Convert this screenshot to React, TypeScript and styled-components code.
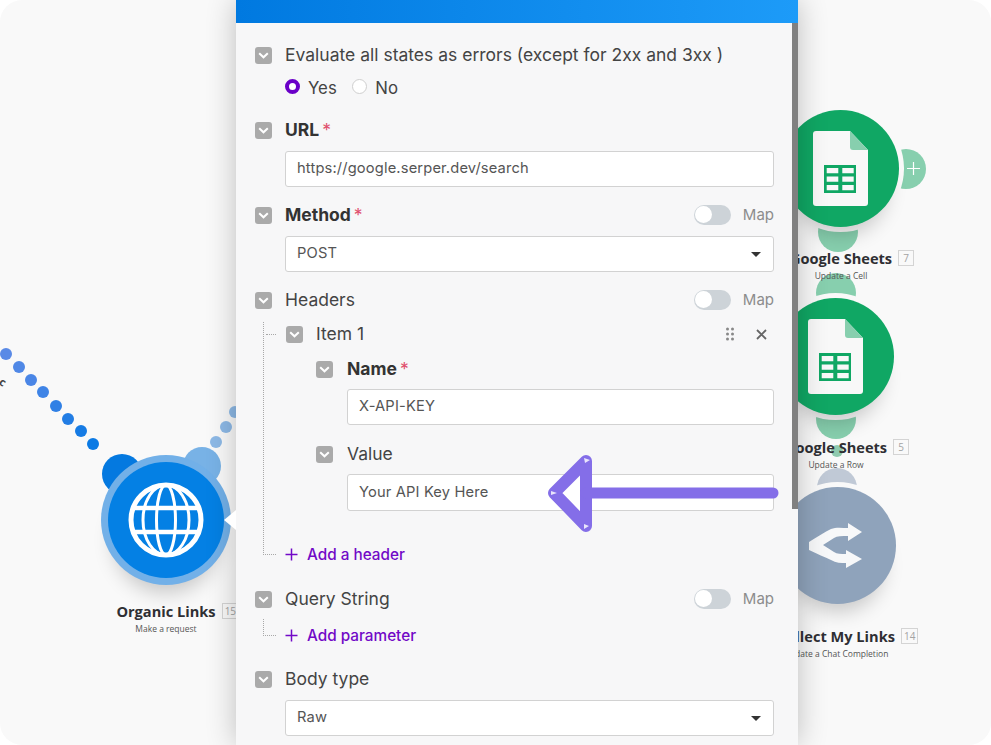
import React from "react";
import styled, { createGlobalStyle } from "styled-components";

const Global = createGlobalStyle`
  html, body { margin: 0; padding: 0; background: #fff; }
  * { box-sizing: border-box; }
  #root { width: 991px; height: 745px; overflow: hidden; }
`;

const Canvas = styled.div`
  position: relative;
  width: 991px;
  height: 745px;
  overflow: hidden;
  background: #f9f9f9;
  border-radius: 22px;
  font-family: "Open Sans", sans-serif;
`;

const Dot = styled.span<{ $x: number; $y: number; $c: string }>`
  position: absolute;
  left: ${(p) => p.$x - 6}px;
  top: ${(p) => p.$y - 6}px;
  width: 12px;
  height: 12px;
  border-radius: 50%;
  background: ${(p) => p.$c};
`;

const Fragment = styled.span`
  position: absolute;
  left: 0;
  top: 375px;
  font-size: 11px;
  line-height: 14px;
  font-weight: 700;
  color: #444;
  transform: rotate(35deg);
`;

const Node = styled.div<{ $x: number; $y: number }>`
  position: absolute;
  left: ${(p) => p.$x}px;
  top: ${(p) => p.$y}px;
  width: 0;
  height: 0;
`;

const Ear = styled.span<{ $x: number; $y: number; $c: string; $r?: number }>`
  position: absolute;
  left: ${(p) => p.$x - (p.$r ?? 20)}px;
  top: ${(p) => p.$y - (p.$r ?? 20)}px;
  width: ${(p) => (p.$r ?? 20) * 2}px;
  height: ${(p) => (p.$r ?? 20) * 2}px;
  border-radius: 50%;
  background: ${(p) => p.$c};
  display: flex;
  align-items: center;
  justify-content: flex-end;
  padding-right: 6px;
`;

const Disc = styled.div<{ $c: string; $r: number; $shadow?: boolean }>`
  position: absolute;
  left: ${(p) => -p.$r}px;
  top: ${(p) => -p.$r}px;
  width: ${(p) => p.$r * 2}px;
  height: ${(p) => p.$r * 2}px;
  border-radius: 50%;
  background: ${(p) => p.$c};
  display: flex;
  align-items: center;
  justify-content: center;
  box-shadow: ${(p) => (p.$shadow ? "0 20px 20px -12px rgba(0, 0, 0, 0.2)" : "none")};
`;

const Notch = styled.span`
  position: absolute;
  z-index: 4;
  left: 58px;
  top: -10px;
  width: 0;
  height: 0;
  border-top: 10px solid transparent;
  border-bottom: 10px solid transparent;
  border-right: 12px solid #fff;
`;

const NodeText = styled.div<{ $top: number; $shift?: number }>`
  position: absolute;
  z-index: 2;
  top: ${(p) => p.$top}px;
  left: ${(p) => (p.$shift ?? 0) - 150}px;
  width: 300px;
  text-align: center;
  color: #2f2f33;
`;

const NodeName = styled.div`
  position: relative;
  width: fit-content;
  margin: 0 auto;
  font-size: 14.6px;
  line-height: 18px;
  font-weight: 700;
  white-space: nowrap;
`;

const Badge = styled.span`
  position: absolute;
  left: calc(100% + 6px);
  top: 1px;
  min-width: 16px;
  height: 16px;
  padding: 0 2px;
  border: 1px solid #d4d4d4;
  background: #f9f9f9;
  font-size: 10px;
  line-height: 14px;
  font-weight: 400;
  text-align: center;
  color: #a3a3a3;
`;

const NodeSub = styled.div`
  font-size: 8.5px;
  line-height: 12px;
  margin-top: 3px;
  color: #555;
  white-space: nowrap;
`;

const Panel = styled.div`
  position: absolute;
  z-index: 3;
  left: 236px;
  top: 0;
  width: 562px;
  height: 745px;
  display: flex;
  flex-direction: column;
  background: #f7f7f8;
  box-shadow: 0 0 28px rgba(0, 0, 0, 0.24);
  font-family: Inter, sans-serif;
  color: #444;
`;

const Header = styled.div`
  flex: none;
  height: 23px;
  background: linear-gradient(90deg, #0079e0, #1d9bf8);
`;

const ScrollThumb = styled.div`
  position: absolute;
  right: 0;
  top: 23px;
  width: 6px;
  height: 486px;
  background: #808080;
`;

const Body = styled.div`
  padding: 20px 24px 0 19px;
  display: flex;
  flex-direction: column;
`;

const Row = styled.div<{ $top?: number; $left?: number; $gap?: number }>`
  display: flex;
  align-items: center;
  height: 24px;
  margin-top: ${(p) => p.$top ?? 0}px;
  margin-left: ${(p) => p.$left ?? 0}px;
  gap: ${(p) => p.$gap ?? 13}px;
`;

const Tile = styled.span`
  flex: none;
  width: 17px;
  height: 17px;
  border-radius: 3px;
  background: #aaaaaa;
  display: flex;
  align-items: center;
  justify-content: center;
`;

const Label = styled.span<{ $bold?: boolean }>`
  font-size: 17.5px;
  line-height: 22px;
  font-weight: ${(p) => (p.$bold ? 700 : 400)};
  color: ${(p) => (p.$bold ? "#333" : "#444")};
  white-space: nowrap;
`;

const Star = styled.span`
  color: #e0506e;
  font-weight: 400;
  margin-left: 3px;
`;

const Radios = styled.div`
  display: flex;
  align-items: center;
  height: 24px;
  margin: 9px 0 0 30px;
`;

const Radio = styled.span<{ $on?: boolean }>`
  width: 15px;
  height: 15px;
  border-radius: 50%;
  background: #fff;
  border: ${(p) => (p.$on ? "4px solid #6a00c8" : "1px solid #cfcfcf")};
  margin-right: 8px;
  margin-top: -3px;
`;

const RadioText = styled.span`
  font-size: 16.8px;
  color: #444;
  margin-right: 15.5px;
`;

const Input = styled.div<{ $left: number; $top: number; $h?: number }>`
  position: relative;
  height: ${(p) => p.$h ?? 36}px;
  margin: ${(p) => p.$top}px 0 0 ${(p) => p.$left}px;
  padding: 0 12px 2px 11px;
  display: flex;
  align-items: center;
  justify-content: space-between;
  background: #fff;
  border: 1px solid #d2d2d2;
  border-radius: 3px;
  font-size: 14.7px;
  letter-spacing: 0.15px;
  color: #555;
`;

const Caret = styled.span`
  width: 0;
  height: 0;
  margin-top: 2px;
  border-left: 5.5px solid transparent;
  border-right: 5.5px solid transparent;
  border-top: 5.5px solid #333;
`;

const MapControl = styled.div`
  margin-left: auto;
  display: flex;
  align-items: center;
  gap: 12px;
  font-size: 15px;
  line-height: 18px;
  color: #8c8c8c;
  padding-bottom: 1px;
`;

const Toggle = styled.span`
  width: 37px;
  height: 20px;
  border-radius: 10px;
  background: #cdd3d8;
  display: flex;
  align-items: center;
  padding-left: 1px;
`;

const Knob = styled.span`
  width: 17px;
  height: 17px;
  border-radius: 50%;
  background: #fff;
`;

const Tree = styled.div<{ $top: number }>`
  position: relative;
  margin: ${(p) => p.$top}px 0 0 8px;
  padding-left: 23px;
`;

const Rail = styled.span`
  position: absolute;
  left: 0;
  top: 0;
  bottom: 12px;
  border-left: 1px dotted #a8a8a8;
`;

const Branch = styled.span<{ $item?: boolean }>`
  position: absolute;
  left: ${(p) => (p.$item ? 3 : 0)}px;
  ${(p) => (p.$item ? "top: 12px;" : "bottom: 12px;")}
  width: ${(p) => (p.$item ? 10 : 13)}px;
  border-top: 1px dotted #a8a8a8;
`;

const ItemActions = styled.div`
  margin-left: auto;
  margin-right: 7px;
  display: flex;
  align-items: center;
  gap: 22px;
`;

const AddRow = styled.div<{ $top: number }>`
  display: flex;
  align-items: center;
  gap: 9px;
  height: 24px;
  margin: ${(p) => p.$top}px 0 0 -1px;
  font-size: 15.3px;
  font-weight: 500;
  color: #7209c7;
  padding-bottom: 1px;
`;

const ArrowLayer = styled.svg`
  position: absolute;
  z-index: 4;
  left: 0;
  top: 0;
  pointer-events: none;
`;

const Chevron = () => (
  <svg width="11" height="7" viewBox="0 0 11 7" fill="none">
    <path d="M1.2 1.2 5.5 5.3 9.8 1.2" stroke="#fff" strokeWidth="2" />
  </svg>
);

const Plus = () => (
  <svg width="13" height="13" viewBox="0 0 13 13" fill="none">
    <path d="M6.500 0.500v12M0.500 6.500h12" stroke="#7209c7" strokeWidth="1.500" />
  </svg>
);

const Globe = () => (
  <svg width="76" height="76" viewBox="0 0 76 76" fill="none" stroke="#fff">
    <circle cx="38" cy="38" r="35" strokeWidth="5" />
    <path d="M4 26h68M4 50h68" strokeWidth="4.500" />
    <ellipse cx="38" cy="38" rx="9.500" ry="35" strokeWidth="3" />
    <ellipse cx="38" cy="38" rx="23" ry="35" strokeWidth="3" />
  </svg>
);

const SheetDoc = () => (
  <svg width="55" height="75" viewBox="0 0 55 75">
    <path d="M3 0h34l18 19v53a3 3 0 0 1-3 3H3a3 3 0 0 1-3-3V3a3 3 0 0 1 3-3z" fill="#f8f8f8" />
    <path d="M37 0l18 19H40a3 3 0 0 1-3-3z" fill="#87cfae" />
    <path d="M11 34h32v28H11z" fill="#10a764" />
    <path d="M13.700 37h11.600v5.300H13.700zM29.300 37h11.400v5.300H29.300zM13.700 45.500h11.600v5.300H13.700zM29.300 45.500h11.400v5.300H29.300zM13.700 54h11.600v5.300H13.700zM29.300 54h11.400v5.300H29.300z" fill="#f8f8f8" />
  </svg>
);

const RouterSvg = styled.svg`
  margin-right: 3px;
`;

const Router = () => (
  <RouterSvg width="53" height="45" viewBox="0 0 53 45" fill="#f7f8f9">
    <path d="M0 19C8 14 16 9 22 6C27 4 33 5 39 5V0L53 9L39 18V13C33 13 28 13 25 15L14 22L25 29C28 31 32 31 37 31V27L53 36L37 45V40C32 40 27 40 22 37C16 34 8 31 0 27Z" />
  </RouterSvg>
);

const FlowDots: [number, number, string][] = [
  [6, 354, "#5a8ae6"], [19, 367, "#5088e6"], [31, 380, "#4a86e6"], [43, 392, "#3f84e6"],
  [56, 406, "#3080e5"], [68, 419, "#227de4"], [81, 431, "#167be4"], [93, 444, "#0b7ae4"],
  [216, 442, "#8db9e6"], [226, 427, "#8db9e6"], [235, 412, "#8db9e6"], [837, 451, "#8fcaae"],
];

const Chart = () => (
  <>
    {FlowDots.map(([x, y, c]) => (
      <Dot key={x} $x={x} $y={y} $c={c} />
    ))}
    <Fragment>c</Fragment>

    <Node $x={166} $y={520}>
      <Ear $x={-44} $y={-46} $r={20} $c="#0479e0" />
      <Ear $x={36} $y={-54} $r={19} $c="#78b2e6" />
      <Disc $r={65} $c="#72b0e8" $shadow />
      <Disc $r={58} $c="#0480e4"><Globe /></Disc>
      <Notch />
      <NodeText $top={82}>
        <NodeName>Organic Links<Badge>15</Badge></NodeName>
        <NodeSub>Make a request</NodeSub>
      </NodeText>
    </Node>

    <Node $x={840} $y={168.5}>
      <Ear $x={66} $y={0} $c="#87cfae">
        <svg width="13" height="13" viewBox="0 0 13 13"><path d="M6.500 0v13M0 6.500h13" stroke="#fff" strokeWidth="1.200" /></svg>
      </Ear>
      <Ear $x={-2} $y={63.5} $c="#87cfae" />
      <Disc $r={63.5} $c="#f9f9f9" />
      <Disc $r={58.5} $c="#10a764" $shadow><SheetDoc /></Disc>
      <NodeText $top={80} $shift={1}>
        <NodeName>Google Sheets<Badge>7</Badge></NodeName>
        <NodeSub>Update a Cell</NodeSub>
      </NodeText>
    </Node>

    <Node $x={835} $y={356}>
      <Ear $x={1} $y={-63} $c="#87cfae" />
      <Ear $x={1} $y={63} $c="#87cfae" />
      <Disc $r={63.5} $c="#f9f9f9" />
      <Disc $r={58.5} $c="#10a764" $shadow><SheetDoc /></Disc>
      <NodeText $top={82} $shift={1}>
        <NodeName>Google Sheets<Badge>5</Badge></NodeName>
        <NodeSub>Update a Row</NodeSub>
      </NodeText>
    </Node>

    <Node $x={837} $y={545.5}>
      <Ear $x={0} $y={-57.5} $c="#c0c9d6" />
      <Disc $r={63.5} $c="#f9f9f9" />
      <Disc $r={58.5} $c="#8fa3bb" $shadow><Router /></Disc>
      <NodeText $top={81.5} $shift={-1}>
        <NodeName>Collect My Links<Badge>14</Badge></NodeName>
        <NodeSub>Update a Chat Completion</NodeSub>
      </NodeText>
    </Node>
  </>
);

const MapSwitch = () => (
  <MapControl>
    <Toggle><Knob /></Toggle>
    Map
  </MapControl>
);

export default function App() {
  return (
    <>
      <Global />
      <Canvas>
        <Chart />
        <Panel>
          <Header />
          <Body>
            <Row>
              <Tile><Chevron /></Tile>
              <Label>Evaluate all states as errors (except for 2xx and 3xx )</Label>
            </Row>
            <Radios>
              <Radio $on />
              <RadioText>Yes</RadioText>
              <Radio />
              <RadioText>No</RadioText>
            </Radios>

            <Row $top={18}>
              <Tile><Chevron /></Tile>
              <Label $bold>URL<Star>*</Star></Label>
            </Row>
            <Input $left={30} $top={9}>https://google.serper.dev/search</Input>

            <Row $top={16}>
              <Tile><Chevron /></Tile>
              <Label $bold>Method<Star>*</Star></Label>
              <MapSwitch />
            </Row>
            <Input $left={30} $top={9}>POST<Caret /></Input>

            <Row $top={16}>
              <Tile><Chevron /></Tile>
              <Label>Headers</Label>
              <MapSwitch />
            </Row>
            <Tree $top={10}>
              <Rail />
              <Branch $item />
              <Row>
                <Tile><Chevron /></Tile>
                <Label>Item 1</Label>
                <ItemActions>
                  <svg width="8" height="14" viewBox="0 0 8 14" fill="#888">
                    <circle cx="1.500" cy="2" r="1.500" /><circle cx="6.500" cy="2" r="1.500" />
                    <circle cx="1.500" cy="7" r="1.500" /><circle cx="6.500" cy="7" r="1.500" />
                    <circle cx="1.500" cy="12" r="1.500" /><circle cx="6.500" cy="12" r="1.500" />
                  </svg>
                  <svg width="11" height="11" viewBox="0 0 11 11" stroke="#666" strokeWidth="1.800">
                    <path d="M1 1l9 9M10 1l-9 9" />
                  </svg>
                </ItemActions>
              </Row>
              <Row $top={11} $left={30} $gap={14}>
                <Tile><Chevron /></Tile>
                <Label $bold>Name<Star>*</Star></Label>
              </Row>
              <Input $left={61} $top={8}>X-API-KEY</Input>
              <Row $top={17} $left={30} $gap={14}>
                <Tile><Chevron /></Tile>
                <Label>Value</Label>
              </Row>
              <Input $left={61} $top={8} $h={37}>Your API Key Here</Input>
              <Branch />
              <AddRow $top={32}><Plus />Add a header</AddRow>
            </Tree>

            <Row $top={20}>
              <Tile><Chevron /></Tile>
              <Label>Query String</Label>
              <MapSwitch />
            </Row>
            <Tree $top={8}>
              <Rail />
              <Branch />
              <AddRow $top={5}><Plus />Add parameter</AddRow>
            </Tree>

            <Row $top={19}>
              <Tile><Chevron /></Tile>
              <Label>Body type</Label>
            </Row>
            <Input $left={30} $top={9}>Raw<Caret /></Input>
          </Body>
          <ScrollThumb />
        </Panel>
        <ArrowLayer width="991" height="745" viewBox="0 0 991 745">
          <path d="M586 461 554 493 586 526Z" fill="#fff" stroke="#846ee8" strokeWidth="12" strokeLinejoin="round" />
          <path d="M586 493H773" stroke="#846ee8" strokeWidth="11" strokeLinecap="round" />
          <path d="M584 458l6 2-5 3zM551 491l6 2-6 2zM584 524l5 2-5 3z" fill="#e9e5fb" />
        </ArrowLayer>
      </Canvas>
    </>
  );
}
